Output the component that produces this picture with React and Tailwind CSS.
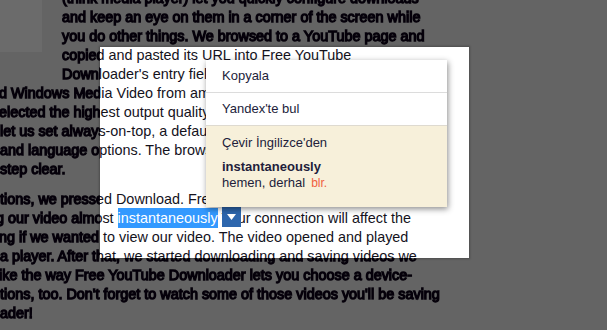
import React from "react";

const P1 = [
  { t: "(think media player) let you quickly configure downloads", c: "pl-[62px]" },
  { t: "and keep an eye on them in a corner of the screen while", c: "pl-[62px]" },
  { t: "you do other things. We browsed to a YouTube page and", c: "pl-[62px]" },
  { t: "copied and pasted its URL into Free YouTube", c: "pl-[62px]" },
  { t: "Downloader's entry field. We could save our video as", c: "pl-[62px]" },
  { t: "d Windows Media Video from among many formats, and we", c: "-ml-[1px]" },
  { t: "elected the highest output quality. Other settings", c: "-ml-[1px]" },
  { t: "let us set always-on-top, a default folder, and the skin", c: "ml-0" },
  { t: "and language options. The browser integration made that", c: "ml-0" },
  { t: "step clear.", c: "ml-0" },
];

const P2 = [
  { t: "tions, we pressed Download. Free YouTube Downloader got going,", c: "ml-0" },
  { t: "HL", c: "-ml-[4px]" },
  { t: "ng if we wanted to view our video. The video opened and played", c: "-ml-[1px]" },
  { t: "a player. After that, we started downloading and saving videos we", c: "ml-0" },
  { t: "ike the way Free YouTube Downloader lets you choose a device-", c: "-ml-[1px]" },
  { t: "tions, too. Don't forget to watch some of those videos you'll be saving", c: "ml-0" },
  { t: "ader!", c: "ml-0" },
];

function Line({ l }) {
  if (l.t === "HL") {
    return (
      <div className={"h-[19px] leading-[19px] whitespace-nowrap " + l.c}>
        g our video almost{" "}
        <span className="relative">
          <span className="bg-[#3399ff] text-white py-[2px]">instantaneously</span>
          <span className="absolute left-[calc(100%+4px)] top-[-3px] w-[19px] h-[20px] bg-[#2d66ad] flex items-center justify-center">
            <svg width="9" height="6" viewBox="0 0 9 6">
              <path d="M0 0 H9 L4.5 6 Z" fill="#ffffff" />
            </svg>
          </span>
        </span>
        {"  Your connection will affect the"}
      </div>
    );
  }
  return <div className={"h-[19px] leading-[19px] whitespace-nowrap " + l.c}>{l.t}</div>;
}

function PageText({ dim }) {
  return (
    <div
      className={
        "absolute left-0 top-[-11px] w-[607px] text-[14.4px] font-['Liberation_Sans',Arial,sans-serif] " +
        (dim
          ? "text-[#05000a] [-webkit-text-stroke:1.3px_#05000a] blur-[0.6px]"
          : "text-[#14121c]")
      }
    >
      <div className="flex flex-col">
        {P1.map((l, i) => (
          <Line key={i} l={l} />
        ))}
      </div>
      <div className="flex flex-col mt-[11px]">
        {P2.map((l, i) => (
          <Line key={i} l={l} />
        ))}
      </div>
    </div>
  );
}

export default function App() {
  return (
    <div className="relative w-[607px] h-[330px] overflow-hidden bg-[#646464] font-['Liberation_Sans',Arial,sans-serif]">
      <div className="absolute left-0 top-0 w-[42px] h-[52px] bg-[#6b6b6b]" />
      <PageText dim />
      <div className="absolute left-[100px] top-[47px] w-[369px] h-[211px] bg-white overflow-hidden shadow-[0_0_2px_1px_rgba(0,0,0,0.25)]">
        <div className="absolute left-[-100px] top-[-47px] w-[607px] h-[330px]">
          <PageText />
        </div>
      </div>
      <div className="absolute left-[206px] top-[60px] w-[241px] bg-white shadow-[1px_2px_6px_rgba(0,0,0,0.45)] text-[13px] text-[#221d3b]">
        <div className="h-[32px] flex items-center pl-[16px]">Kopyala</div>
        <div className="h-[33px] flex items-center pl-[16px] border-t border-[#dcdcdc]">Yandex'te bul</div>
        <div className="bg-[#f7f0da] border-t border-[#dedad0] pl-[16px] pt-[9px] pb-[16px] leading-[16px]">
          <div>Çevir İngilizce'den</div>
          <div className="font-bold mt-[8px]">instantaneously</div>
          <div>
            hemen, derhal<span className="text-[12px] text-[#f0603f] ml-[6px]">blr.</span>
          </div>
        </div>
      </div>
    </div>
  );
}
